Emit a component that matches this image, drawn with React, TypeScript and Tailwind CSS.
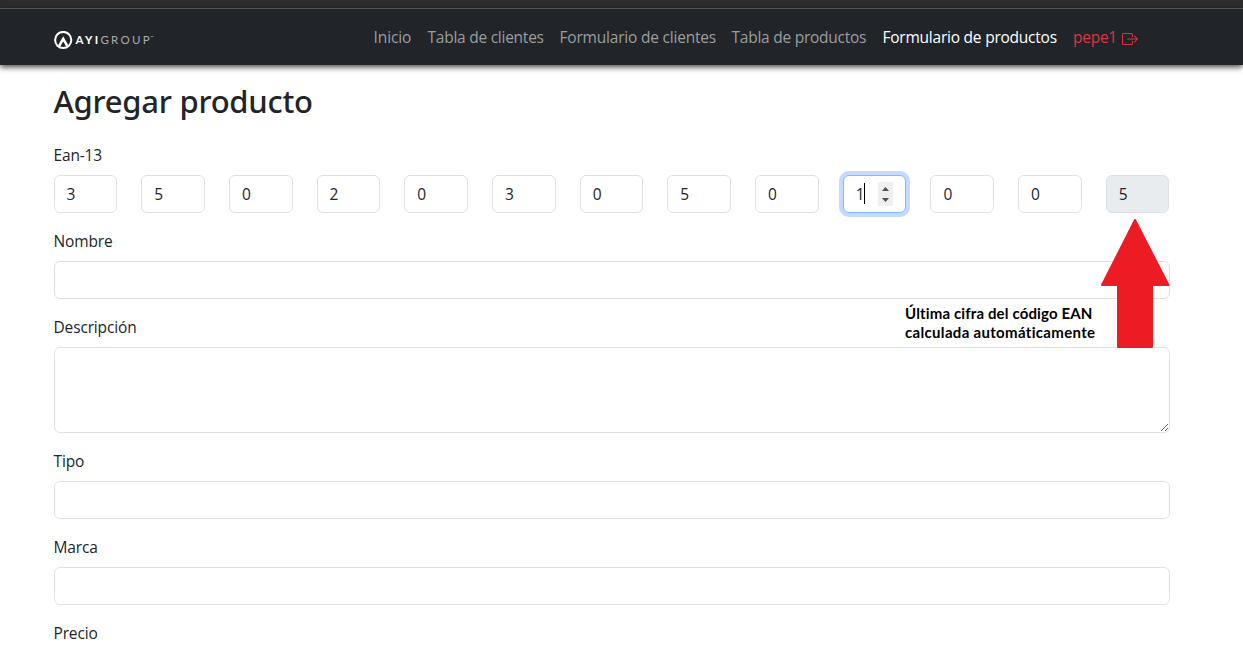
import { BsBoxArrowRight } from "react-icons/bs";

const digits = ["3", "5", "0", "2", "0", "3", "0", "5", "0", "1", "0", "0", "5"];
const FOCUSED = 9;
const CHECK_DIGIT = 12;

const control =
  "block w-full rounded-[6px] border border-[#dee2e6] bg-white px-3 py-1.5 text-[15.5px] leading-6 text-[#212529] outline-none";

function Logo() {
  return (
    <a href="#" className="mt-[5px] flex h-5 items-center text-white">
      <svg width="19" height="19" viewBox="0 0 19 19" fill="none" className="shrink-0">
        <circle cx="9.2" cy="9" r="8.1" stroke="#fff" strokeWidth="2" />
        <path d="M5.2 14.800 9.200 7.800l4 7" stroke="#fff" strokeWidth="2.500" />
      </svg>
      <span className="ml-[2.5px] flex items-center font-['Lato',sans-serif] text-[11.5px] leading-none">
        <span className="font-bold tracking-[2.3px]">AYI</span>
        <span className="tracking-[2.3px] text-[#a9abad]">GROUP</span>
        <span className="-ml-[1.5px] -mt-[5px] text-[4px] text-[#c4c6c8]">™</span>
      </span>
    </a>
  );
}

function Navbar() {
  return (
    <header className="relative h-[57px] border-t border-[#555] bg-[#212529] shadow-[0_2px_6px_rgba(0,0,0,0.75)]">
      <nav className="flex h-full items-start pl-[54px] pt-4 text-[15.5px] leading-6 text-[#9b9d9f]">
        <div className="w-[319.5px]">
          <Logo />
        </div>
        <div className="flex gap-4 whitespace-nowrap">
          <a href="#" className="w-[38px] tracking-[-0.1px]">Inicio</a>
          <a href="#" className="w-[116px] tracking-[-0.25px]">Tabla de clientes</a>
          <a href="#" className="w-[156px] tracking-[-0.2px]">Formulario de clientes</a>
          <a href="#" className="w-[135px] tracking-[-0.25px]">Tabla de productos</a>
          <a href="#" className="w-[174.5px] font-medium tracking-[-0.23px] text-white">Formulario de productos</a>
          <a href="#" className="flex w-[65px] justify-between text-[#dc3545]">
            <span className="tracking-[-0.25px]">pepe1</span>
            <BsBoxArrowRight className="mt-1.5 size-4" />
          </a>
        </div>
      </nav>
    </header>
  );
}

function Label({ children }: { children: string }) {
  return (
    <label className="mb-2 block text-[15.5px] leading-6 tracking-[-0.15px]">
      {children}
    </label>
  );
}

function DigitField({ value, index }: { value: string; index: number }) {
  if (index === FOCUSED) {
    return (
      <div className="relative">
        <input
          readOnly
          defaultValue={value}
          className="block w-full rounded-[6px] border border-[#86b7fe] bg-white px-3 py-1.5 text-[15.5px] leading-6 text-[#212529] shadow-[0_0_0_4px_#c2dbfe] outline-none"
        />
        <span className="absolute left-[21px] top-2 h-[21px] w-px bg-black" />
        <span className="absolute right-[13.5px] top-[7px] flex h-6 w-[15px] items-center justify-center bg-[#efefef]">
          <svg width="7" height="16" viewBox="0 0 7 16" fill="#505050">
            <path d="M0 5 3.5 1 7 5ZM0 12l3.5 4L7 12Z" />
          </svg>
        </span>
      </div>
    );
  }
  return (
    <input
      readOnly
      defaultValue={value}
      className={
        index === CHECK_DIGIT
          ? "block w-full rounded-[6px] border border-[#dee2e6] bg-[#e9ecef] px-3 py-1.5 text-[15.5px] leading-6 text-[#212529] outline-none"
          : "block w-full rounded-[6px] border border-[#dee2e6] bg-white px-3 py-1.5 text-[15.5px] leading-6 text-[#212529] outline-none"
      }
    />
  );
}

function Annotation() {
  return (
    <>
      <p className="absolute left-[905px] top-[304px] whitespace-nowrap font-['Lato',sans-serif] text-[15px] font-bold leading-[19px] text-black">
        <span className="tracking-[0.14px]">Última cifra del código EAN</span>
        <br />
        <span className="tracking-[0.32px]">calculada automáticamente</span>
      </p>
      <svg className="absolute left-[1101px] top-[219px]" width="69" height="130" viewBox="0 0 69 130">
        <path
          d="M34 1 67.5 66H51V128H17V66H1Z"
          fill="#ed1c24"
          stroke="#ed1c24"
          strokeWidth="2"
          strokeLinejoin="round"
        />
      </svg>
    </>
  );
}

export default function App() {
  return (
    <div className="relative h-[647px] w-[1243px] overflow-hidden bg-white font-['Open_Sans','Noto_Sans',sans-serif] text-[#212529]">
      <div className="h-2 bg-[#2d2d2d]" />
      <Navbar />
      <main className="ml-[53.5px] w-[1116px] pt-[17px]">
        <h1 className="mb-[23px] font-['Noto_Sans','Open_Sans',sans-serif] text-[31px] font-medium leading-[38px] tracking-[-0.25px]">
          Agregar producto
        </h1>
        <form className="flex flex-col gap-4">
          <div>
            <Label>Ean-13</Label>
            <div className="grid grid-cols-13 gap-6">
              {digits.map((digit, i) => (
                <DigitField key={i} value={digit} index={i} />
              ))}
            </div>
          </div>
          <div>
            <Label>Nombre</Label>
            <input className={control} />
          </div>
          <div>
            <Label>Descripción</Label>
            <textarea className={control} rows={3} />
          </div>
          <div>
            <Label>Tipo</Label>
            <input className={control} />
          </div>
          <div>
            <Label>Marca</Label>
            <input className={control} />
          </div>
          <div>
            <Label>Precio</Label>
            <input className={control} />
          </div>
        </form>
      </main>
      <Annotation />
    </div>
  );
}
